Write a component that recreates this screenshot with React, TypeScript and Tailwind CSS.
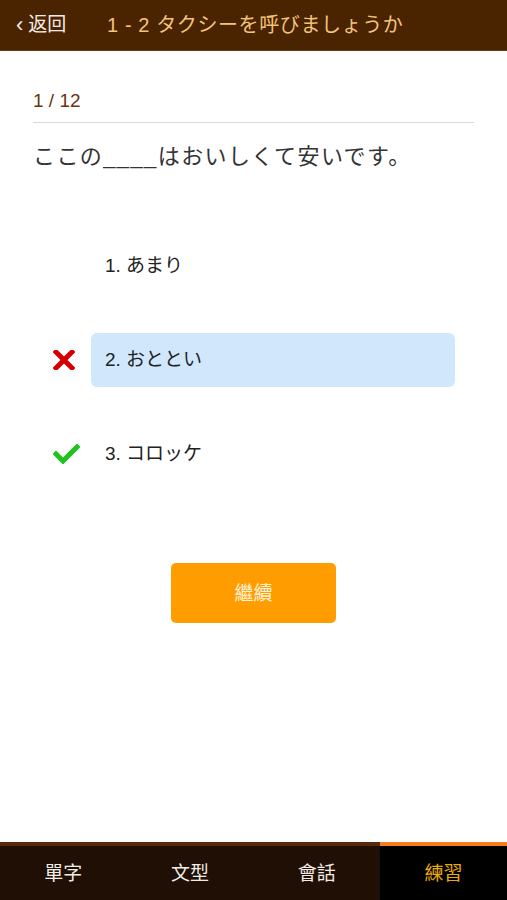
import React from "react";

const jp = { fontFamily: '"Liberation Sans", "Noto Sans CJK JP", sans-serif' };
const tc = { fontFamily: '"Liberation Sans", "Noto Sans CJK TC", sans-serif' };

function XIcon() {
  return (
    <svg width="22" height="20" viewBox="0 0 22 20">
      <path d="M3 2 L19 18 M19 2 L3 18" stroke="#d40000" strokeWidth="5" strokeLinecap="square" fill="none" />
    </svg>
  );
}

function CheckIcon() {
  return (
    <svg width="27" height="20" viewBox="0 0 27 20">
      <path d="M3 10 L10 17 L24 3" stroke="#1ec41b" strokeWidth="5" strokeLinecap="square" strokeLinejoin="miter" fill="none" />
    </svg>
  );
}

export default function App() {
  const tabs = ["單字", "文型", "會話", "練習"];
  return (
    <div className="flex h-[900px] w-[507px] flex-col bg-white" style={jp}>
      <header className="flex h-[51px] items-center border-b border-[#6a3a17] bg-[#4a2300]">
        <div className="flex w-[107px] items-center pl-[16px] text-[19px] text-[#f4ece4]">
          <span className="mr-[5px] text-[22px] leading-none">‹</span>
          <span>返回</span>
        </div>
        <div className="text-[20px] tracking-[0.6px] text-[#f2c47a]">1 - 2 タクシーを呼びましょうか</div>
      </header>

      <main className="flex flex-col px-[33px] pt-[38px]">
        <div className="h-[24px] text-[19px] leading-[24px] text-[#6b3310]">1 / 12</div>
        <div className="mt-[9px] h-px bg-[#d8d8d8]" />
        <div className="mt-[19px] h-[30px] text-[22px] leading-[30px] tracking-[1.4px] text-[#333333]">
          ここの____はおいしくて安いです。
        </div>

        <div className="mt-[67px] flex flex-col gap-[40px] text-[19px] text-[#222222]">
          <div className="flex h-[54px] items-center">
            <div className="w-[58px] pl-[20px]" />
            <div className="flex h-full w-[364px] items-center rounded-[6px] pl-[14px]">1. あまり</div>
          </div>
          <div className="flex h-[54px] items-center">
            <div className="flex w-[58px] items-center pl-[20px]">
              <XIcon />
            </div>
            <div className="flex h-full w-[364px] items-center rounded-[6px] bg-[#d0e7fc] pl-[14px]">2. おととい</div>
          </div>
          <div className="flex h-[54px] items-center">
            <div className="flex w-[58px] items-center pl-[20px]">
              <CheckIcon />
            </div>
            <div className="flex h-full w-[364px] items-center rounded-[6px] pl-[14px]">3. コロッケ</div>
          </div>
        </div>

        <div className="mt-[82px] flex justify-center">
          <button
            className="flex h-[60px] w-[165px] items-center justify-center rounded-[5px] bg-[#ff9d00] pt-[2px] text-[19px] text-[#fff4dc]"
            style={tc}
          >
            繼續
          </button>
        </div>
      </main>

      <nav className="mt-auto flex h-[58px] bg-[#1f0f04]" style={tc}>
        {tabs.map((t, i) => {
          const active = i === 3;
          return (
            <div
              key={t}
              className={
                active
                  ? "flex flex-1 items-center justify-center border-t-[4px] border-[#f77d1c] bg-black pt-[2px] text-[19px] text-[#e8a90c]"
                  : "flex flex-1 items-center justify-center border-t-[4px] border-[#5a2a08] pt-[2px] text-[19px] text-[#f2ece6]"
              }
            >
              {t}
            </div>
          );
        })}
      </nav>
    </div>
  );
}
